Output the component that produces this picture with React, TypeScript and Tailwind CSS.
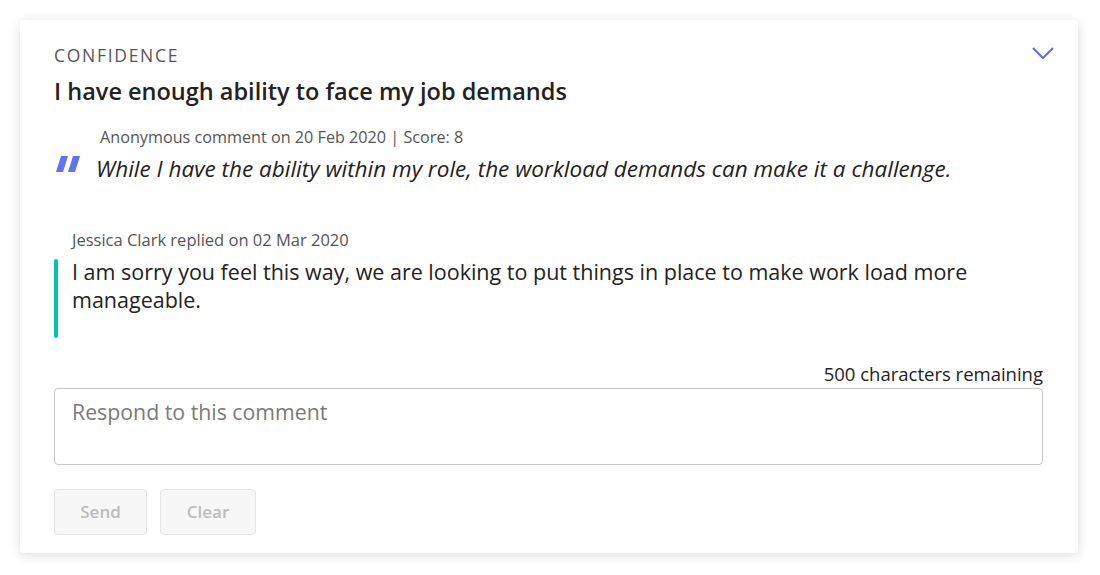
export default function App() {
  return (
    <div className="min-h-[575px] bg-white px-5 pt-5 font-['Open_Sans',sans-serif]">
      <div className="relative w-[1058px] rounded-[4px] bg-white pt-[24px] pr-[35px] pb-[18px] pl-[34px] shadow-[0_2px_12px_rgba(0,0,0,0.14)]">
        <button className="absolute top-[27px] right-[24px] text-[#5b6cf0]">
          <svg width="22" height="13" viewBox="0 0 22 13" fill="none" stroke="currentColor" strokeWidth="2">
            <polyline points="1,1 11,11 21,1" />
          </svg>
        </button>

        <div className="text-[17.5px] leading-[22px] uppercase tracking-[1.7px] text-[#555]">Confidence</div>
        <h2 className="mt-[10px] text-[23.5px] font-semibold leading-[30px] text-[#222]">
          I have enough ability to face my job demands
        </h2>

        <div className="mt-[21px] pl-[46px] text-[16.2px] leading-[20px] text-[#555]">
          Anonymous comment on 20 Feb 2020 | Score: 8
        </div>
        <div className="mt-[8px] flex items-start">
          <svg className="mt-[1px] ml-[2px] mr-[16px] shrink-0" width="24" height="17" viewBox="0 0 24 17" fill="#6173f0">
            <polygon points="5,0 12,0 7,16 0,16" />
            <polygon points="17,0 24,0 19,16 12,16" />
          </svg>
          <p className="text-[22.5px] italic leading-[28px] text-[#222]">
            While I have the ability within my role, the workload demands can make it a challenge.
          </p>
        </div>

        <div className="mt-[47px] pl-[18px] text-[16.5px] leading-[20px] text-[#555]">
          Jessica Clark replied on 02 Mar 2020
        </div>
        <div className="mt-[8px] flex gap-[14px]">
          <div className="mt-[1px] h-[79px] w-[4px] shrink-0 rounded-full bg-[#00c4a7]" />
          <p className="text-[21.5px] leading-[28px] text-[#222]">
            I am sorry you feel this way, we are looking to put things in place to make work load more manageable.
          </p>
        </div>

        <div className="mt-[24px] text-right text-[18.5px] leading-[24px] text-[#222]">500 characters remaining</div>
        <textarea
          className="mt-[2px] block h-[77px] w-full resize-none rounded-[4px] border border-[#c8c8c8] px-[17px] pt-[10px] text-[21.3px] leading-[26px] text-[#222] placeholder:text-[#7a7a7a] focus:outline-none"
          placeholder="Respond to this comment"
        />

        <div className="mt-[24px] flex gap-[13px]">
          <button className="h-[46px] w-[93px] rounded-[4px] border border-[#e6e6e6] bg-[#f7f7f7] text-[17px] font-semibold text-[#bbb]">
            Send
          </button>
          <button className="h-[46px] w-[96px] rounded-[4px] border border-[#e6e6e6] bg-[#f7f7f7] text-[17px] font-semibold text-[#bbb]">
            Clear
          </button>
        </div>
      </div>
    </div>
  );
}
